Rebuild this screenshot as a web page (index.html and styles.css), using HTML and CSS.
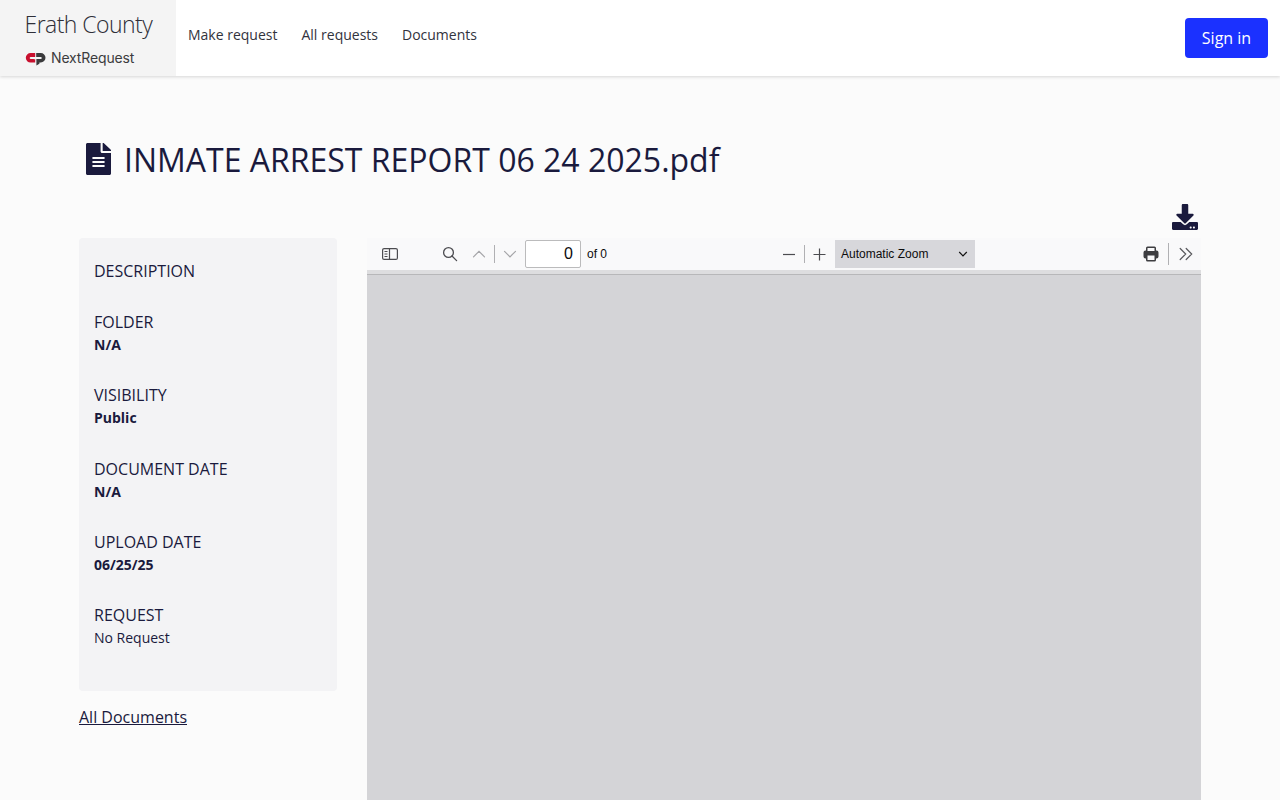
FILE: index.html
```html
<!DOCTYPE html>
<html lang="en">
<head>
<meta charset="utf-8">
<title>INMATE ARREST REPORT 06 24 2025.pdf</title>
<link rel="stylesheet" href="styles.css">
</head>
<body>
<header class="topbar">
  <a class="brand">
    <span class="brand-name">Erath County</span>
    <span class="brand-product">
      <svg class="brand-mark" width="21" height="14" viewBox="0 0 21 14">
        <path fill="#c8102e" d="M10.200 1H5.600a4.800 4.800 0 0 0 0 9.600h4.600V7.200H8.800V7.100H5.800a1.100 1.100 0 0 1 0-2.200h4.400z"/>
        <path fill="#3a3a3c" d="M11.200 1h4.600a4.700 4.700 0 0 1 0 9.400h-1.400v1.300L11.400 13.500V7.100h4.300a1.100 1.100 0 0 0 0-2.200h-4.500z"/>
      </svg>
      <span class="product-name">NextRequest</span>
    </span>
  </a>
  <nav class="nav">
    <a>Make request</a><a>All requests</a><a>Documents</a>
  </nav>
  <button class="sign-in">Sign in</button>
</header>

<main class="page">
  <h1 class="title">
    <svg class="title-icon" width="25" height="32" viewBox="0 0 384 512" preserveAspectRatio="none"><path fill="currentColor" d="M224 136V0H24C10.700 0 0 10.700 0 24v464c0 13.300 10.700 24 24 24h336c13.300 0 24-10.700 24-24V160H248c-13.200 0-24-10.800-24-24zm64 236c0 6.600-5.400 12-12 12H108c-6.600 0-12-5.400-12-12v-8c0-6.600 5.400-12 12-12h168c6.600 0 12 5.400 12 12v8zm0-64c0 6.600-5.400 12-12 12H108c-6.600 0-12-5.400-12-12v-8c0-6.600 5.400-12 12-12h168c6.600 0 12 5.400 12 12v8zm0-72v8c0 6.600-5.400 12-12 12H108c-6.600 0-12-5.400-12-12v-8c0-6.600 5.400-12 12-12h168c6.600 0 12 5.400 12 12zm96-114.100v6.100H256V0h6.100c6.400 0 12.500 2.500 17 7l97.900 98c4.500 4.500 7 10.600 7 16.900z"/></svg>
    <span class="title-text">INMATE ARREST REPORT 06 24 2025.pdf</span>
  </h1>
  <div class="actions">
    <svg width="26" height="26" viewBox="0 0 512 512"><path fill="currentColor" d="M216 0h80c13.300 0 24 10.700 24 24v168h87.700c17.800 0 26.700 21.500 14.100 34.100L269.700 378.300c-7.500 7.500-19.800 7.500-27.300 0L90.100 226.100c-12.600-12.600-3.700-34.100 14.100-34.100H192V24c0-13.300 10.700-24 24-24zm296 376v112c0 13.300-10.700 24-24 24H24c-13.300 0-24-10.700-24-24V376c0-13.300 10.700-24 24-24h146.700l49 49c20.100 20.100 52.500 20.100 72.600 0l49-49H488c13.300 0 24 10.700 24 24zm-124 88c0-11-9-20-20-20s-20 9-20 20 9 20 20 20 20-9 20-20zm64 0c0-11-9-20-20-20s-20 9-20 20 9 20 20 20 20-9 20-20z"/></svg>
  </div>
  <div class="columns">
    <aside class="side">
      <dl class="details">
        <div><dt>DESCRIPTION</dt></div>
        <div><dt>FOLDER</dt><dd>N/A</dd></div>
        <div><dt>VISIBILITY</dt><dd>Public</dd></div>
        <div><dt>DOCUMENT DATE</dt><dd>N/A</dd></div>
        <div><dt>UPLOAD DATE</dt><dd>06/25/25</dd></div>
        <div><dt>REQUEST</dt><dd class="plain">No Request</dd></div>
      </dl>
      <a class="all-docs">All Documents</a>
    </aside>
    <section class="viewer">
      <div class="toolbar">
        <svg class="tool sidebar-toggle" width="16" height="16" viewBox="0 0 16 16" fill="none" stroke="#4c4c50" stroke-width="1.200"><rect x=".6" y="2.600" width="14.800" height="10.800" rx="1.500"/><path d="M7.500 2.600v10.800M2.500 5.500h3M2.500 8h3M2.500 10.500h3"/></svg>
        <svg class="tool find" width="16" height="16" viewBox="0 0 16 16" fill="none" stroke="#4c4c50" stroke-width="1.300"><circle cx="6.500" cy="6.500" r="4.900"/><path d="M10 10l4.600 4.600" stroke-linecap="round"/></svg>
        <svg class="tool previous" width="14" height="16" viewBox="0 0 14 16" fill="none" stroke="#a5a5a8" stroke-width="1.200" stroke-linecap="round"><path d="M1.500 10.800L7 5.300l5.500 5.500"/></svg>
        <i class="rule"></i>
        <svg class="tool next" width="14" height="16" viewBox="0 0 14 16" fill="none" stroke="#a5a5a8" stroke-width="1.200" stroke-linecap="round"><path d="M1.500 5.300L7 10.800l5.500-5.500"/></svg>
        <span class="page-number">0</span>
        <span class="page-count">of 0</span>
        <div class="zoom-tools">
          <svg width="14" height="16" viewBox="0 0 14 16" stroke="#4c4c50" stroke-width="1.200"><path d="M1 8.500h12"/></svg>
          <i class="rule"></i>
          <svg width="14" height="16" viewBox="0 0 14 16" stroke="#4c4c50" stroke-width="1.200"><path d="M.5 8.500h12M6.500 2.500v12"/></svg>
          <span class="zoom-select">Automatic Zoom
            <svg width="10" height="8" viewBox="0 0 10 8" fill="none" stroke="#111" stroke-width="1.200"><path d="M1.200 2L5 5.800l3.800-3.800"/></svg>
          </span>
        </div>
        <div class="end-tools">
          <svg width="16" height="16" viewBox="0 0 16 16"><path fill="#3d3d40" fill-rule="evenodd" d="M4.500.5h7A1.500 1.500 0 0 1 13 2v2.500h.5A2 2 0 0 1 15.500 6.500v4a2 2 0 0 1-2 2H13V14a1.500 1.500 0 0 1-1.500 1.500h-7A1.500 1.500 0 0 1 3 14v-1.500h-.5a2 2 0 0 1-2-2v-4a2 2 0 0 1 2-2H3V2A1.500 1.500 0 0 1 4.500.5zM4.500 2v3h7V2zM4.500 9.500V14h7V9.500z"/></svg>
          <i class="rule"></i>
          <svg width="16" height="16" viewBox="0 0 16 16" fill="none" stroke="#58585c" stroke-width="1.200" stroke-linecap="round"><path d="M2.200 2.500L7.700 8l-5.500 5.500M8.200 2.500l5.500 5.500-5.500 5.500"/></svg>
        </div>
      </div>
      <div class="loading"></div>
      <div class="canvas"></div>
    </section>
  </div>
</main>
</body>
</html>
```
FILE: styles.css
```css
* { box-sizing: border-box; }
body {
  margin: 0;
  height: 800px;
  overflow: hidden;
  display: flex;
  flex-direction: column;
  background: #fbfbfb;
  color: #1a1a3d;
  font-family: "Open Sans", sans-serif;
  font-size: 16px;
}
svg { display: block; flex: none; }
.topbar {
  flex: none;
  height: 76px;
  display: flex;
  background: #fff;
  box-shadow: 0 1px 3px rgba(0, 0, 0, .15);
}
.brand {
  width: 176px;
  padding: 8px 0 0 25px;
  background: #f4f4f4;
  color: #2e2f38;
}
.brand-name {
  display: block;
  margin-left: -.5px;
  font-size: 23px;
  font-weight: 300;
  line-height: 33px;
  letter-spacing: -.55px;
  white-space: nowrap;
}
.brand-product { display: flex; align-items: center; height: 18px; margin-top: 8px; gap: 5px; }
.brand-mark { margin-top: 2px; }
.product-name { font: 400 14px/18px Inter, sans-serif; letter-spacing: -.15px; color: #3c3c3e; }
.nav {
  display: flex;
  gap: 24px;
  padding: 24px 0 0 12px;
  font-size: 14px;
  line-height: 21px;
  color: #32333d;
}
.sign-in {
  width: 83px;
  height: 40px;
  margin: 18px 12px 0 auto;
  padding: 0;
  border: 0;
  border-radius: 4px;
  background: #1b31ff;
  color: #fff;
  font: 400 16px/24px "Open Sans", sans-serif;
}
.page {
  flex: 1;
  min-height: 0;
  width: 1122px;
  margin-left: 79px;
  padding-top: 60px;
  display: flex;
  flex-direction: column;
}
.title {
  display: flex;
  align-items: center;
  height: 46px;
  margin: 0;
  padding-left: 6.5px;
  gap: 13.5px;
  font-size: 32px;
  font-weight: 400;
  line-height: 46px;
  white-space: nowrap;
}
.title-text { padding-top: 1px; }
.actions {
  display: flex;
  justify-content: flex-end;
  height: 56px;
  padding: 22px 3.5px 0 0;
}
.columns { display: flex; flex: 1; min-height: 0; gap: 30px; }
.side { width: 258px; }
.details {
  display: flex;
  flex-direction: column;
  gap: 27.3px;
  height: 453px;
  margin: 0 0 14px;
  padding: 20.85px 15px;
  border-radius: 4px;
  background: #f3f3f5;
}
.details dt { line-height: 24px; }
.details dd { margin: 0; font-size: 14px; line-height: 22px; font-weight: 700; }
.details .plain { font-weight: 400; }
.all-docs { line-height: 24px; text-decoration: underline; }
.viewer { flex: 1; min-width: 0; display: flex; flex-direction: column; }
.toolbar {
  flex: none;
  display: flex;
  align-items: center;
  height: 32px;
  padding-left: 15px;
  background: #f9f9fa;
  color: #0c0c0d;
  font: 12px/16px "Liberation Sans", sans-serif;
}
.find { margin-left: 44px; }
.previous { margin-left: 14px; }
.rule { width: 1px; height: 18px; background: #b0b0b3; }
.toolbar > .rule { margin: 0 8px; }
.page-number {
  width: 56px;
  height: 28px;
  margin: 0 6px 0 8px;
  padding-right: 7px;
  border: 1px solid #bbbbbc;
  border-radius: 2px;
  background: #fff;
  font-size: 16px;
  line-height: 26px;
  text-align: right;
}
.zoom-tools { display: flex; align-items: center; gap: 8px; margin-left: 175px; }
.zoom-select {
  display: flex;
  align-items: center;
  justify-content: space-between;
  width: 140px;
  height: 28px;
  padding: 0 7px 0 6px;
  background: #d7d7db;
}
.end-tools { display: flex; align-items: center; gap: 9px; margin: 0 7px 0 auto; }
.end-tools .rule { height: 22px; }
.loading { flex: none; height: 5px; background: #dddddf; border-bottom: 1px solid #b7b7b9; }
.canvas { flex: 1; background: #d4d4d7; }
```
